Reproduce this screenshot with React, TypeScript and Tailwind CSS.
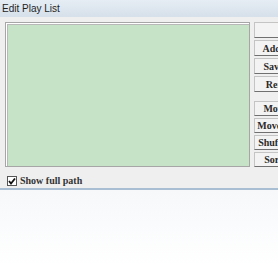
export default function App() {
  const top = ["", "Add Files", "Save List", "Remove"];
  const bottom = ["Move Up", "Move Down", "Shuffle List", "Sort List"];
  const btn =
    "w-[58px] bg-[#f3f3f3] border border-[#c4c4c4] border-b-[#707070] flex items-center justify-center whitespace-nowrap";

  return (
    <div className="w-[278px] h-[268px] overflow-hidden bg-white" style={{ fontFamily: "'Liberation Sans', Arial, sans-serif" }}>
      {/* window */}
      <div className="w-[320px] h-[190px] flex flex-col border-b-2 border-[#a9bdd3] bg-[#efefef]">
        <div className="h-[17px] flex items-center pl-[2px] bg-gradient-to-b from-[#e6edf4] to-[#d6e0ea] text-[10px] text-[#1e1e1e]">
          Edit Play List
        </div>
        <div className="flex-1 flex pl-[5px] pt-[5px]">
          <div className="flex flex-col">
            <div className="w-[245px] h-[145px] border border-[#a6a6a6] bg-[#c6e3c8] shadow-[inset_1px_1px_0_#fff,inset_2px_2px_0_#b8b8b8]" />
            <div className="flex items-center gap-[3px] mt-[6px] ml-[2px]">
              <div className="w-[10px] h-[10px] border border-[#555] bg-white flex items-center justify-center">
                <svg width="8" height="8" viewBox="0 0 8 8">
                  <path d="M1 4 L3 6.5 L7 1.5" stroke="#111" strokeWidth="1.8" fill="none" />
                </svg>
              </div>
              <span className="text-[10px] font-semibold text-[#333]" style={{ fontFamily: "'Liberation Serif', serif" }}>
                Show full path
              </span>
            </div>
          </div>
          <div className="flex flex-col ml-[4px] text-[10px] font-semibold text-[#2a2a2a]" style={{ fontFamily: "'Liberation Serif', serif" }}>
            <div className="flex flex-col gap-[2px]">
              {top.map((b, i) => (
                <div key={i} className={`${btn} h-[16px]`}>
                  {b}
                </div>
              ))}
            </div>
            <div className="flex flex-col gap-[2px] mt-[9px]">
              {bottom.map((b) => (
                <div key={b} className={`${btn} h-[15px]`}>
                  {b}
                </div>
              ))}
            </div>
          </div>
        </div>
      </div>
      <div className="h-[76px] bg-gradient-to-b from-[#f6f8fa] to-white" />
    </div>
  );
}
